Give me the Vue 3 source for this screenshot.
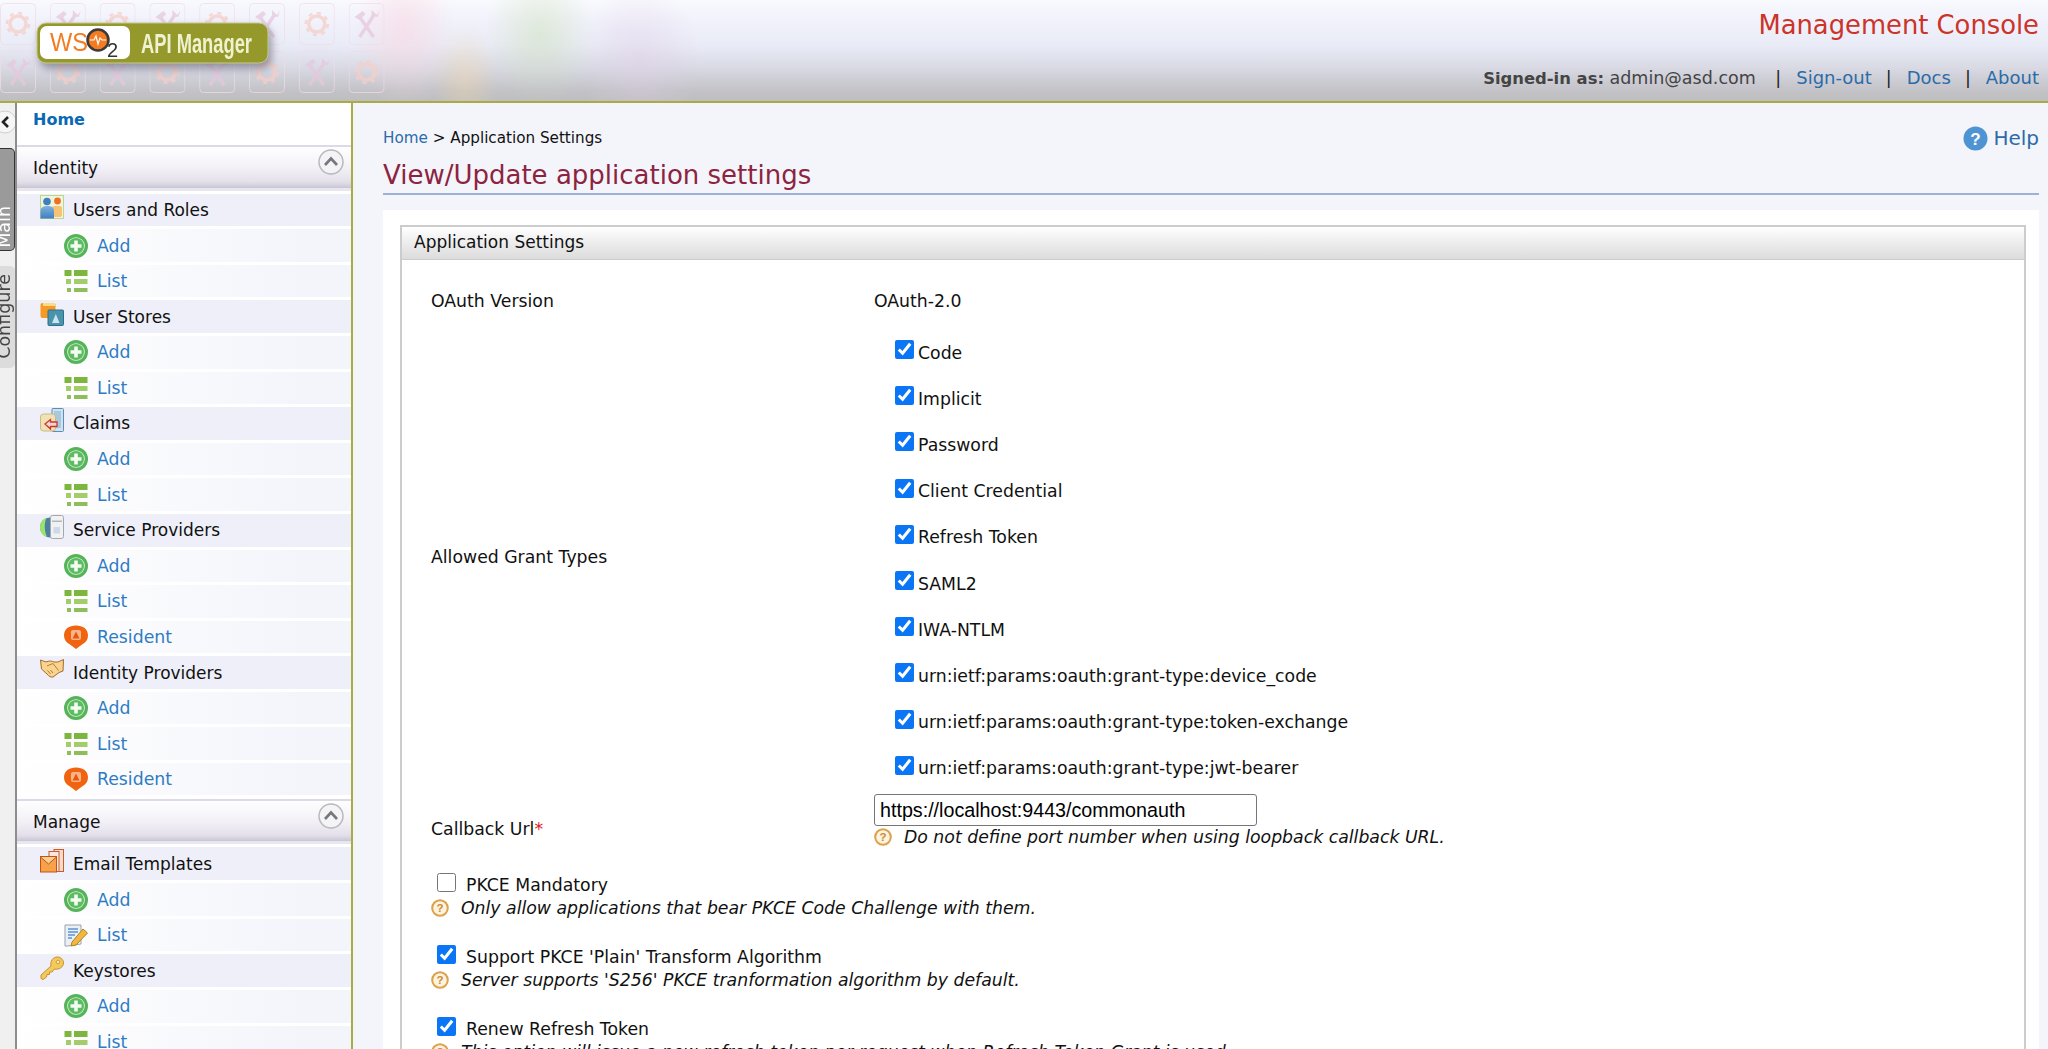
<script setup>
// sidebar data, the icon names point at the symbols defined at the top of the template
const add = { label: "Add", icon: "add" };
const list = { label: "List", icon: "list" };
const resident = { label: "Resident", icon: "resident" };

const menu = [
  {
    title: "Identity",
    groups: [
      { name: "Users and Roles", icon: "users", items: [add, list] },
      { name: "User Stores", icon: "stores", items: [add, list] },
      { name: "Claims", icon: "claims", items: [add, list] },
      { name: "Service Providers", icon: "providers", items: [add, list, resident] },
      { name: "Identity Providers", icon: "handshake", items: [add, list, resident] },
    ],
  },
  {
    title: "Manage",
    groups: [
      { name: "Email Templates", icon: "email", items: [add, { label: "List", icon: "edit" }] },
      { name: "Keystores", icon: "key", items: [add, list] },
    ],
  },
];

const grantTypes = [
  "Code",
  "Implicit",
  "Password",
  "Client Credential",
  "Refresh Token",
  "SAML2",
  "IWA-NTLM",
  "urn:ietf:params:oauth:grant-type:device_code",
  "urn:ietf:params:oauth:grant-type:token-exchange",
  "urn:ietf:params:oauth:grant-type:jwt-bearer",
];

const options = [
  {
    label: "PKCE Mandatory",
    checked: false,
    hint: "Only allow applications that bear PKCE Code Challenge with them.",
  },
  {
    label: "Support PKCE 'Plain' Transform Algorithm",
    checked: true,
    hint: "Server supports 'S256' PKCE tranformation algorithm by default.",
  },
  {
    label: "Renew Refresh Token",
    checked: true,
    hint: "This option will issue a new refresh token per request when Refresh Token Grant is used.",
  },
];

// header wallpaper, two rows of tiles with gear and tools swapping
const tiles = [];
for (let row = 0; row < 2; row++) {
  for (let col = 0; col < 8; col++) {
    tiles.push({
      x: col * 49.8,
      y: row * 48,
      icon: (row + col) % 2 == 0 ? "gear" : "tools",
    });
  }
}
</script>

<template>
  <div class="page">
    <svg class="defs" width="0" height="0">
      <defs>
        <linearGradient id="blueBody" x1="0" y1="0" x2="0" y2="1">
          <stop offset="0" stop-color="#7fb2e0" />
          <stop offset="1" stop-color="#3f7fc0" />
        </linearGradient>
        <symbol id="gear" viewBox="0 0 36 42">
          <rect x="0.5" y="0.5" width="35" height="41" rx="4" fill="none" stroke="#f2dbe2" />
          <circle cx="18" cy="21" r="8" fill="none" stroke="#f6cfc9" stroke-width="3.6" />
          <circle cx="18" cy="21" r="11" fill="none" stroke="#f6cfc9" stroke-width="2.6" stroke-dasharray="4 4.6" />
        </symbol>
        <symbol id="tools" viewBox="0 0 36 42">
          <rect x="0.5" y="0.5" width="35" height="41" rx="4" fill="none" stroke="#f0dde8" />
          <path d="M11 14 L25 34 M26 11 L11 34" fill="none" stroke="#e6c8de" stroke-width="3.4" />
          <path d="M6 14 L14 8 L17 11 L11 17 Z M23 7 L23 13 L29 14 L31 8 L28 12 Z" fill="#e6c8de" />
        </symbol>
        <symbol id="add" viewBox="0 0 24 24">
          <circle cx="12" cy="12" r="10.4" fill="#e2f3dc" stroke="#55b45a" stroke-width="3.2" />
          <circle cx="12" cy="12" r="8" fill="#5dbb62" />
          <path d="M12 6.5v11M6.5 12h11" stroke="#f4fbf2" stroke-width="3.6" />
        </symbol>
        <symbol id="list" viewBox="0 0 24 24">
          <g fill="#7cb63c">
            <rect x="0.5" y="1" width="7" height="6" />
            <rect x="10" y="1" width="13.5" height="6" />
          </g>
          <g fill="#a3cd6a">
            <rect x="2" y="10" width="5" height="5" />
            <rect x="10" y="10" width="13.5" height="5" />
          </g>
          <g fill="#8fbd5b">
            <rect x="3" y="19" width="4" height="4" />
            <rect x="10" y="19" width="13.5" height="4" />
          </g>
        </symbol>
        <symbol id="resident" viewBox="0 0 24 24">
          <path d="M12 24 L6 19.5 C2 17.5 0 14.5 0 10.5 C0 4 5 0.5 12 0.5 C19 0.5 24 4 24 10.5 C24 14.5 22 17.5 18 19.5 Z" fill="#f0640f" />
          <rect x="7" y="5" width="10" height="10" rx="2" fill="#f9b48a" />
          <path d="M12 6.5 L15.5 13.5 H8.5 Z" fill="#e9560a" />
        </symbol>
        <symbol id="users" viewBox="0 0 24 24">
          <rect x="0.5" y="0.5" width="23" height="23" fill="#eef5dd" stroke="#b9d790" />
          <rect x="12" y="11" width="10" height="11" rx="2" fill="#f8c275" />
          <circle cx="17.5" cy="6" r="3.4" fill="#f0701e" />
          <path d="M0.5 23.5 V16 C0.5 12 4 11 7.5 11 C11 11 14 12 14 16 V23.5 Z" fill="url(#blueBody)" />
          <circle cx="7" cy="6.5" r="3.8" fill="#3f7fc0" />
        </symbol>
        <symbol id="stores" viewBox="0 0 24 24">
          <rect x="0.5" y="1" width="15" height="15" rx="2" fill="#f59b25" />
          <rect x="3" y="1" width="12" height="3" fill="#fbdc83" />
          <rect x="8" y="8" width="15.5" height="15.5" rx="1" fill="#4a93ad" stroke="#316f86" />
          <path d="M12 21 L15.8 12 L19.5 21 Z" fill="#c9e4ef" />
        </symbol>
        <symbol id="claims" viewBox="0 0 24 24">
          <rect x="12" y="0.5" width="11.5" height="23" rx="1" fill="#cfe2ee" stroke="#5a8db8" />
          <rect x="14" y="3" width="7" height="17" fill="#a8c8de" />
          <rect x="0.5" y="6" width="15" height="17" rx="3" fill="#f1e2b6" stroke="#c9b98a" />
          <path d="M5 16 L10.5 11.5 V14 H17 V18.5 H10.5 V21 Z" fill="#f4d4d0" stroke="#c8372f" stroke-width="1.3" />
        </symbol>
        <symbol id="providers" viewBox="0 0 24 24">
          <circle cx="10" cy="12.5" r="10" fill="#4f7fa0" />
          <path d="M0 12.5 C0 7 3 3.5 7 2.5 C4 6 4 16 7 22 C3 21 0 17 0 12.5 Z" fill="#9be36f" />
          <rect x="10.5" y="0.5" width="13" height="23" rx="2" fill="#f0f1f3" stroke="#a5a7ad" />
          <rect x="12" y="5.5" width="10" height="1.5" fill="#b5b7bd" />
          <rect x="13.5" y="12" width="6.5" height="6.5" fill="#ccd9e6" />
        </symbol>
        <symbol id="handshake" viewBox="0 0 24 24">
          <path d="M0.5 2 L6 4 C9 2.5 12 3 14 4 L18 4 L23.5 1.5 L23 13 L19 14.5 L13 19 C11 19.5 9 18.5 7 16 L1.5 11 Z" fill="#f8d48f" stroke="#a86a2b" />
          <path d="M7 8 L13 5.5 L18.5 12.5 M10.5 16 L7.5 12.5 M13 15 L10.5 12" fill="none" stroke="#bd7a36" />
        </symbol>
        <symbol id="email" viewBox="0 0 24 24">
          <rect x="14" y="0.5" width="9.5" height="22" fill="#f6dccd" stroke="#c95c2b" />
          <rect x="9" y="2.5" width="10" height="20" fill="#f8e7da" stroke="#c95c2b" />
          <rect x="0.5" y="7.5" width="16" height="15.5" fill="#f7a24a" stroke="#c1521e" />
          <path d="M0.5 8 L8.5 15 L16.5 8" fill="#fad08e" stroke="#c1521e" />
        </symbol>
        <symbol id="edit" viewBox="0 0 24 24">
          <path d="M1 2 H17 V21 L4 23 H1 Z" fill="#e8eff7" stroke="#9aa3ad" />
          <path d="M4 6 H14 M4 9 H14 M4 12 H11 M4 15 H8" stroke="#5b94d6" stroke-width="1.4" />
          <path d="M8 19 L19 6 L23.5 10 L12 22 L7 23 Z" fill="#f1b73f" stroke="#b5801f" />
        </symbol>
        <symbol id="key" viewBox="0 0 24 24">
          <path d="M1 19 L11 10 C10 5 13 1 17.5 1 C21 1 23.5 4 23.5 7 C23.5 11 19 14 14.5 13 L12 16 L9.5 16 L9.5 18.5 L7 18.5 L6.5 21 L3 23.5 L1 22.5 Z" fill="#f4c95b" stroke="#c6912a" />
          <circle cx="18" cy="6" r="1.8" fill="#fbeeb7" stroke="#c6912a" stroke-width="0.8" />
        </symbol>
        <symbol id="hint" viewBox="0 0 18 18">
          <circle cx="9" cy="9" r="7.8" fill="#fdf3df" stroke="#dba24b" stroke-width="2" />
          <text x="9" y="13.2" text-anchor="middle" font-size="11.5" font-weight="700" font-family="Liberation Sans, sans-serif" fill="#c98c36">?</text>
        </symbol>
        <symbol id="chevron" viewBox="0 0 26 26">
          <circle cx="13" cy="13" r="12" fill="#f4f3f6" stroke="#b9b9bd" stroke-width="1.5" />
          <path d="M7 16 L13 9.5 L19 16" fill="none" stroke="#77777c" stroke-width="2.6" />
        </symbol>
      </defs>
    </svg>

    <header class="topBar">
      <svg class="wallpaper" width="400" height="102" viewBox="0 0 400 102">
        <use
          v-for="(tile, i) in tiles"
          :key="i"
          :href="'#' + tile.icon"
          :x="tile.x"
          :y="tile.y + 3"
          width="36"
          height="42"
        />
      </svg>

      <div class="logo">
        <svg width="236" height="48" viewBox="0 0 236 48">
          <rect x="1" y="1" width="231" height="40" rx="9" fill="#95982a" stroke="#c6c88a" />
          <rect x="4" y="4" width="90" height="33" rx="7" fill="#ffffff" />
          <text x="14" y="29" font-size="25" font-family="Liberation Sans, sans-serif" fill="#f47b20" textLength="38" lengthAdjust="spacingAndGlyphs">WS</text>
          <circle cx="62" cy="18" r="10.5" fill="#f47b20" stroke="#3a3a3a" stroke-width="2.5" />
          <path d="M54 18 H58 L60 14 L62 22 L64 16 L66 18 H70" fill="none" stroke="#fff" stroke-width="1.2" />
          <text x="71" y="35" font-size="20" font-family="Liberation Sans, sans-serif" fill="#333333">2</text>
          <text x="105" y="31" font-size="28" font-weight="700" font-family="Liberation Sans, sans-serif" fill="#eff2cf" textLength="111" lengthAdjust="spacingAndGlyphs">API Manager</text>
        </svg>
      </div>

      <div class="topRight">
        <div class="consoleName">Management Console</div>
        <div class="userLinks">
          <b>Signed-in as:</b> admin@asd.com
          <span class="pipe">|</span><a>Sign-out</a>
          <span class="pipe">|</span><a>Docs</a>
          <span class="pipe">|</span><a>About</a>
        </div>
      </div>
    </header>

    <div class="layout">
      <div class="tabStrip">
        <svg class="collapse" width="17" height="26" viewBox="0 0 17 26">
          <circle cx="5" cy="13" r="11" fill="#f6f6f6" stroke="#cfcfcf" />
          <path d="M8 8 L3 13 L8 18" fill="none" stroke="#222" stroke-width="2.6" />
        </svg>
        <div class="tab tabActive"><span>Main</span></div>
        <div class="tab"><span>Configure</span></div>
      </div>

      <nav class="sideMenu">
        <div class="homeRow"><a>Home</a></div>
        <section v-for="section in menu" :key="section.title" class="menuSection">
          <div class="sectionTitle">
            <span>{{ section.title }}</span>
            <svg class="toggle" width="26" height="26"><use href="#chevron" /></svg>
          </div>
          <div v-for="group in section.groups" :key="group.name">
            <div class="groupRow">
              <svg width="24" height="24"><use :href="'#' + group.icon" /></svg>
              {{ group.name }}
            </div>
            <div v-for="item in group.items" :key="item.label" class="itemRow">
              <svg width="24" height="24"><use :href="'#' + item.icon" /></svg>
              <a>{{ item.label }}</a>
            </div>
          </div>
        </section>
      </nav>

      <main class="content">
        <div class="crumbRow">
          <div class="crumbs"><a>Home</a> &gt; Application Settings</div>
          <div class="help">
            <svg width="25" height="25" viewBox="0 0 25 25">
              <circle cx="12.5" cy="12.5" r="12" fill="#4f94d2" />
              <text x="12.5" y="18.5" text-anchor="middle" font-size="17" font-weight="700" font-family="Liberation Sans, sans-serif" fill="#ffffff">?</text>
            </svg>
            Help
          </div>
        </div>
        <h1>View/Update application settings</h1>

        <div class="panel">
          <div class="box">
            <div class="boxTitle">Application Settings</div>
            <div class="boxBody">
              <div class="formGrid">
                <div class="oauthLabel">OAuth Version</div>
                <div class="oauthValue">OAuth-2.0</div>

                <div>Allowed Grant Types</div>
                <div class="grantList">
                  <label v-for="grant in grantTypes" :key="grant" class="grant">
                    <input type="checkbox" checked />
                    {{ grant }}
                  </label>
                </div>

                <div class="callbackLabel">Callback Url<span class="required">*</span></div>
                <div>
                  <input class="urlInput" type="text" value="https://localhost:9443/commonauth" />
                  <div class="hint">
                    <svg width="18" height="18"><use href="#hint" /></svg>
                    <i>Do not define port number when using loopback callback URL.</i>
                  </div>
                </div>
              </div>

              <div class="optionList">
                <div v-for="option in options" :key="option.label" class="option">
                  <label class="optionCheck">
                    <input type="checkbox" :checked="option.checked" />
                    {{ option.label }}
                  </label>
                  <div class="hint">
                    <svg width="18" height="18"><use href="#hint" /></svg>
                    <i>{{ option.hint }}</i>
                  </div>
                </div>
              </div>
            </div>
          </div>
        </div>
      </main>
    </div>
  </div>
</template>

<style>
html,
body {
  margin: 0;
  height: 100%;
  overflow: hidden;
}
</style>

<style scoped>
.page {
  height: 100vh;
  overflow: hidden;
  display: flex;
  flex-direction: column;
  font-family: "DejaVu Sans", "Liberation Sans", sans-serif;
  font-size: 17.3px;
  color: #111;
  background: #f4f5fb;
}

.defs {
  position: absolute;
}

a {
  color: #2f7cc4;
}

/* top bar */
.topBar {
  position: relative;
  flex: 0 0 auto;
  height: 101px;
  display: flex;
  justify-content: space-between;
  padding: 0 9px 0 36px;
  border-bottom: 2px solid #a9ab45;
  background:
    radial-gradient(ellipse 34px 55px at 465px 78px, rgba(245, 215, 165, 0.4), transparent),
    radial-gradient(ellipse 55px 70px at 540px 35px, rgba(205, 225, 185, 0.5), transparent),
    radial-gradient(ellipse 60px 80px at 640px 60px, rgba(225, 205, 230, 0.45), transparent),
    radial-gradient(ellipse 50px 80px at 405px 30px, rgba(250, 215, 225, 0.6), transparent),
    linear-gradient(#f9fafe 0, #f1f2fb 20px, #e9ebf6 45px, #d8d9e3 68px, #c3c3c8 90px, #bebebf 100%);
}

.wallpaper {
  position: absolute;
  left: 0;
  top: 0;
  opacity: 0.75;
}

.logo {
  position: relative;
  margin-top: 22px;
  filter: drop-shadow(3px 5px 4px rgba(80, 80, 100, 0.55));
  height: 48px;
}

.topRight {
  position: relative;
  text-align: right;
}

.consoleName {
  margin-top: 8px;
  font-size: 25.8px;
  line-height: 34px;
  color: #cc3329;
}

.userLinks {
  margin-top: 24px;
  font-size: 17.5px;
  line-height: 24px;
  color: #444;
}

.userLinks b {
  font-size: 16.4px;
}

.userLinks a {
  color: #2b6ba8;
  font-size: 18px;
}

.pipe {
  margin: 0 15px 0 14px;
  color: #222;
}

/* left column */
.layout {
  flex: 1;
  min-height: 0;
  display: flex;
}

.tabStrip {
  flex: 0 0 15px;
  width: 15px;
  overflow: hidden;
  display: flex;
  flex-direction: column;
  background: #f0f0f0;
  border-right: 2px solid #8d8d8d;
}

.collapse {
  margin-top: 6px;
  flex: 0 0 auto;
}

.tab {
  flex: 0 0 auto;
  box-sizing: border-box;
  width: 16px;
  height: 102px;
  margin-top: 15px;
  margin-left: -1px;
  border-radius: 0 5px 5px 0;
  background: #dcdcdc;
  display: flex;
  align-items: flex-end;
  overflow: hidden;
}

.tab span {
  writing-mode: vertical-rl;
  transform: rotate(180deg);
  font-size: 17.5px;
  line-height: 16px;
  margin-left: -3px;
  padding-top: 9px;
  color: #444;
}

.tabActive {
  margin-top: 13px;
  background: #9a9a9a;
  border: 1.5px solid #333;
  border-left: none;
  height: 103px;
}

.tabActive span {
  color: #fff;
  padding-top: 2px;
}

.sideMenu {
  flex: 0 0 336px;
  width: 336px;
  box-sizing: border-box;
  border-right: 2px solid #a9ab45;
  background: #fff;
  overflow: hidden;
}

.homeRow {
  height: 42px;
  padding: 5px 0 0 16px;
  box-sizing: border-box;
  font-weight: 700;
  font-size: 16px;
  line-height: 24px;
}

.homeRow a {
  color: #0a68b4;
}

.menuSection + .menuSection {
  margin-top: 3.5px;
}

.sectionTitle {
  position: relative;
  box-sizing: border-box;
  height: 45.5px;
  padding: 9px 0 0 16px;
  line-height: 24px;
  font-size: 17px;
  border-top: 2px solid #dcdae6;
  border-bottom: 3px solid #e8e7ee;
  background: linear-gradient(#fefeff 0, #f3f1f7 50%, #e4e0ea 85%, #c9c5d6 100%);
}

.toggle {
  position: absolute;
  right: 7px;
  top: 2px;
}

.groupRow {
  box-sizing: border-box;
  height: 32.8px;
  margin-top: 3px;
  padding-left: 23px;
  display: flex;
  align-items: center;
  gap: 9px;
  font-size: 17px;
  background: #eeeff8;
}

.groupRow svg {
  margin-top: -6px;
}

.itemRow {
  box-sizing: border-box;
  height: 32.5px;
  margin-top: 3px;
  padding-left: 47px;
  display: flex;
  align-items: center;
  gap: 9px;
  background: linear-gradient(90deg, #fff, #f4f5fb 85%);
}

/* main content */
.content {
  flex: 1;
  min-width: 0;
  padding: 18px 9px 0 30px;
}

.crumbRow {
  display: flex;
  justify-content: space-between;
  align-items: center;
  height: 34px;
}

.crumbs {
  font-size: 15.2px;
}

.crumbs a {
  color: #2b6ba8;
}

.help {
  display: flex;
  align-items: center;
  gap: 5px;
  font-size: 20px;
  color: #2b6ba8;
}

h1 {
  margin: 5px 0 0;
  padding-bottom: 2.5px;
  height: 30px;
  line-height: 30px;
  font-size: 26px;
  font-weight: 400;
  color: #8c2440;
  border-bottom: 2px solid #9db2d6;
}

.panel {
  margin-top: 15px;
  padding: 15px 13px 0 17px;
  background: #fff;
  height: 900px;
}

.box {
  border: 2px solid #ccc;
  border-bottom: none;
  height: 100%;
}

.boxTitle {
  box-sizing: border-box;
  height: 33px;
  padding-left: 12px;
  line-height: 30px;
  font-size: 17px;
  background: linear-gradient(#fff, #f0f0f0 40%, #dcdcdc);
  border-bottom: 1px solid #ccc;
}

.boxBody {
  padding: 19px 29px 0;
}

.formGrid {
  display: grid;
  grid-template-columns: 443px 1fr;
  align-items: center;
}

.oauthLabel,
.oauthValue {
  height: 44px;
  line-height: 44px;
}

.grantList {
  margin-top: 7px;
  padding-left: 21px;
}

.grant {
  height: 46.2px;
  display: flex;
  align-items: center;
  gap: 4px;
}

input[type="checkbox"] {
  width: 19px;
  height: 19px;
  margin: 0;
  accent-color: #0a76f6;
  flex: 0 0 auto;
}

.grant input {
  margin-top: -6px;
}

.callbackLabel {
  padding-top: 19px;
}

.required {
  color: #e02020;
}

.urlInput {
  display: block;
  box-sizing: border-box;
  width: 383px;
  height: 32px;
  margin-top: 3px;
  padding: 0 5px;
  border: 1px solid #767676;
  border-radius: 3px;
  font-family: "Liberation Sans", sans-serif;
  font-size: 19.7px;
  color: #000;
}

.hint {
  display: flex;
  align-items: center;
  gap: 12px;
  height: 22px;
  white-space: nowrap;
}

.hint svg {
  flex: 0 0 auto;
}

.optionList {
  margin-top: 25px;
}

.option {
  height: 71.8px;
}

.optionCheck {
  height: 24px;
  padding-left: 6px;
  display: flex;
  align-items: center;
  gap: 10px;
}

.optionCheck input {
  margin-top: -5px;
}
</style>
